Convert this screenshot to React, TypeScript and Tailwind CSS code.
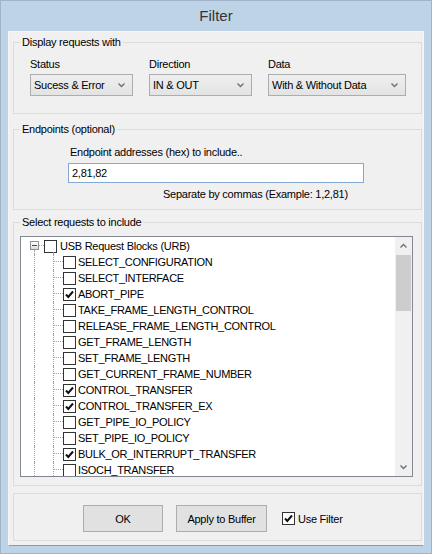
import React from "react";

const ui = "font-['Liberation_Sans',Arial,sans-serif] text-[11px] leading-[14px] tracking-[-0.25px] text-black";

const items: { label: string; checked: boolean }[] = [
  { label: "SELECT_CONFIGURATION", checked: false },
  { label: "SELECT_INTERFACE", checked: false },
  { label: "ABORT_PIPE", checked: true },
  { label: "TAKE_FRAME_LENGTH_CONTROL", checked: false },
  { label: "RELEASE_FRAME_LENGTH_CONTROL", checked: false },
  { label: "GET_FRAME_LENGTH", checked: false },
  { label: "SET_FRAME_LENGTH", checked: false },
  { label: "GET_CURRENT_FRAME_NUMBER", checked: false },
  { label: "CONTROL_TRANSFER", checked: true },
  { label: "CONTROL_TRANSFER_EX", checked: true },
  { label: "GET_PIPE_IO_POLICY", checked: false },
  { label: "SET_PIPE_IO_POLICY", checked: false },
  { label: "BULK_OR_INTERRUPT_TRANSFER", checked: true },
  { label: "ISOCH_TRANSFER", checked: false },
];

function CheckBox({ checked }: { checked: boolean }) {
  return (
    <span className="flex h-[13px] w-[13px] shrink-0 items-center justify-center border border-[#333] bg-white">
      {checked && (
        <svg width="11" height="11" viewBox="0 0 11 11">
          <path d="M2 5.5 L4.3 8 L9 2.5" fill="none" stroke="#111" strokeWidth="2" />
        </svg>
      )}
    </span>
  );
}

function Chevron({ up = false }: { up?: boolean }) {
  return (
    <svg width="7" height="5" viewBox="0 0 7 5">
      <path
        d={up ? "M0.5 4.5 L3.5 1.5 L6.5 4.5" : "M0.5 0.5 L3.5 3.5 L6.5 0.5"}
        fill="none"
        stroke="#707070"
        strokeWidth="1.4"
      />
    </svg>
  );
}

function Combo({ value, width }: { value: string; width: string }) {
  return (
    <div
      className={`flex h-[22px] ${width} items-center justify-between border border-[#adadad] bg-gradient-to-b from-[#efefef] to-[#e3e3e3] pl-[3px] pr-[7px]`}
    >
      <span>{value}</span>
      <Chevron />
    </div>
  );
}

function Group({
  title,
  className,
  children,
}: {
  title?: string;
  className: string;
  children: React.ReactNode;
}) {
  return (
    <fieldset className="ml-[4px] mr-[1px] border border-[#dcdcdc]">
      {title && <legend className="ml-[6px] px-[2px]">{title}</legend>}
      <div className={className}>{children}</div>
    </fieldset>
  );
}

function TreeChild({ label, checked }: { label: string; checked: boolean }) {
  return (
    <div className="flex h-[16px] items-stretch pl-[13px]">
      <div className="w-[19px] shrink-0 border-l border-dotted border-[#a0a0a0]" />
      <div className="flex w-[10px] shrink-0 flex-col border-l border-dotted border-[#a0a0a0]">
        <div className="h-[8px] border-b border-dotted border-[#a0a0a0]" />
      </div>
      <div className="flex items-center">
        <CheckBox checked={checked} />
        <span className="ml-[2px] whitespace-nowrap tracking-[-0.3px]">{label}</span>
      </div>
    </div>
  );
}

function TreeRoot() {
  return (
    <div className="flex h-[16px] items-stretch pl-[9px]">
      <div className="flex w-[9px] shrink-0 flex-col items-center">
        <div className="h-[3px]" />
        <div className="flex h-[9px] w-[9px] items-center justify-center border border-[#919191] bg-gradient-to-b from-white to-[#dcdcdc]">
          <div className="h-[1px] w-[5px] bg-[#3b4a6b]" />
        </div>
        <div className="w-0 flex-1 border-l border-dotted border-[#a0a0a0]" />
      </div>
      <div className="flex w-[5px] flex-col">
        <div className="h-[8px] border-b border-dotted border-[#a0a0a0]" />
      </div>
      <div className="relative flex items-center">
        <CheckBox checked={false} />
        <div className="absolute left-[9px] top-[14px] h-[2px] border-l border-dotted border-[#a0a0a0]" />
        <span className="ml-[3px] whitespace-nowrap">USB Request Blocks (URB)</span>
      </div>
    </div>
  );
}

export default function App() {
  return (
    <div className={`${ui} flex h-[554px] w-[432px] flex-col border border-[#9fb4c8] bg-[#bfd3e6] px-[7px] pb-[7px]`}>
      <div className="flex h-[30px] shrink-0 items-center justify-center">
        <span className="text-[15px] tracking-normal text-[#333]">Filter</span>
      </div>

      <div className="flex flex-1 flex-col border border-b-[#8d9aa7] border-l-[#f4f6f8] border-r-[#f4f6f8] border-t-[#f4f6f8] bg-[#f0f0f0]">
        <div className="h-[3px] shrink-0" />
        <Group title="Display requests with" className="pb-[17px] pl-[16px] pt-[8px]">
          <div className="flex gap-[16px]">
            <div className="flex flex-col gap-[3px]">
              <span>Status</span>
              <Combo value="Sucess & Error" width="w-[103px]" />
            </div>
            <div className="flex flex-col gap-[3px]">
              <span>Direction</span>
              <Combo value="IN & OUT" width="w-[103px]" />
            </div>
            <div className="flex flex-col gap-[3px]">
              <span>Data</span>
              <Combo value="With & Without Data" width="w-[138px]" />
            </div>
          </div>
        </Group>

        <div className="h-[8px] shrink-0" />
        <Group title="Endpoints (optional)" className="pb-[8px] pl-[54px] pt-[9px]">
          <div className="pl-[2px]">Endpoint addresses (hex) to include..</div>
          <div className="mt-[4px] flex h-[20px] w-[296px] items-center border border-[#86a9d1] bg-white pl-[3px]">
            2,81,82
          </div>
          <div className="mt-[4px] pl-[95px]">Separate by commas (Example: 1,2,81)</div>
        </Group>

        <div className="h-[5px] shrink-0" />
        <Group title="Select requests to include" className="pb-[8px] pl-[6px] pr-[8px] pt-[7px]">
          <div className="flex h-[241px] border border-[#828790] bg-white">
            <div className="flex-1 overflow-hidden pt-[1px]">
              <TreeRoot />
              {items.map((it) => (
                <TreeChild key={it.label} label={it.label} checked={it.checked} />
              ))}
            </div>
            <div className="flex w-[17px] shrink-0 flex-col bg-[#f0f0f0]">
              <div className="flex h-[17px] items-center justify-center">
                <Chevron up />
              </div>
              <div className="flex-1 px-[1px] pt-[1px]">
                <div className="h-[56px] bg-[#cdcdcd]" />
              </div>
              <div className="flex h-[17px] items-center justify-center">
                <Chevron />
              </div>
            </div>
          </div>
        </Group>

        <div className="h-[7px] shrink-0" />
        <Group className="pb-[8px] pl-[69px] pt-[11px]">
          <div className="flex items-center">
            <button className="flex h-[27px] w-[80px] items-center justify-center border border-[#adadad] bg-[#e1e1e1]">
              OK
            </button>
            <button className="ml-[13px] flex h-[27px] w-[91px] items-center justify-center border border-[#adadad] bg-[#e1e1e1]">
              Apply to Buffer
            </button>
            <div className="ml-[15px] flex items-center">
              <CheckBox checked />
              <span className="ml-[3px]">Use Filter</span>
            </div>
          </div>
        </Group>
      </div>
    </div>
  );
}
